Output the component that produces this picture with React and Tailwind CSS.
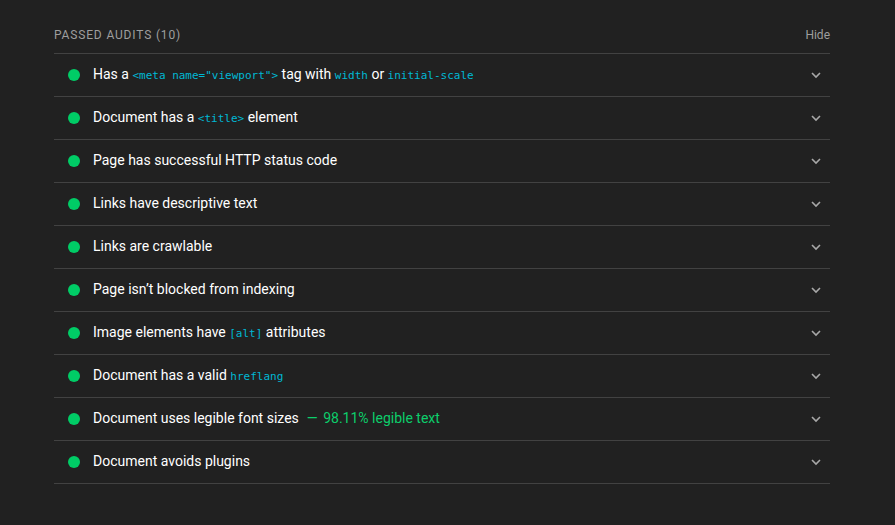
const Code = ({ children }) => (
  <code className="font-['DejaVu_Sans_Mono',monospace] text-[11px] text-[#00b8d4]">{children}</code>
);

const audits = [
  { id: 'viewport', title: <>Has a <Code>{'<meta name="viewport">'}</Code> tag with <Code>width</Code> or <Code>initial-scale</Code></> },
  { id: 'title', title: <>Document has a <Code>{'<title>'}</Code> element</> },
  { id: 'status', title: 'Page has successful HTTP status code' },
  { id: 'link-text', title: 'Links have descriptive text' },
  { id: 'crawlable', title: 'Links are crawlable' },
  { id: 'indexing', title: 'Page isn’t blocked from indexing' },
  { id: 'alt', title: <>Image elements have <Code>[alt]</Code> attributes</> },
  { id: 'hreflang', title: <>Document has a valid <Code>hreflang</Code></> },
  { id: 'font-size', title: 'Document uses legible font sizes', note: '98.11% legible text' },
  { id: 'plugins', title: 'Document avoids plugins' },
];

function Audit({ title, note }) {
  return (
    <li className="border-b border-[#424242]">
      <button type="button" className="flex h-[42px] w-full items-center px-3.5 text-left">
        <span className="mr-[13px] size-3 shrink-0 rounded-full bg-[#00cc66]" />
        <span className="grow pb-0.5 text-sm text-white">
          {title}
          {note && <span className="ml-2 text-[#0cce6b]">— <span className="ml-0.5">{note}</span></span>}
        </span>
        <svg className="-mr-1.5 size-3 shrink-0" viewBox="0 0 12 12" fill="none" stroke="#a8a8a8" strokeWidth="1.6" aria-hidden="true">
          <path d="M2 4l4 4 4-4" />
        </svg>
      </button>
    </li>
  );
}

export default function App() {
  return (
    <main className="min-h-screen bg-[#212121] pt-4 pr-[65px] pb-10 pl-[54px] font-[Roboto,sans-serif]">
      <header className="flex h-[38px] items-center justify-between border-b border-[#424242] text-xs text-[#9e9e9e]">
        <h2 className="tracking-[0.07em]">PASSED AUDITS (10)</h2>
        <button type="button">Hide</button>
      </header>
      <ul>
        {audits.map((audit) => (
          <Audit key={audit.id} title={audit.title} note={audit.note} />
        ))}
      </ul>
    </main>
  );
}
